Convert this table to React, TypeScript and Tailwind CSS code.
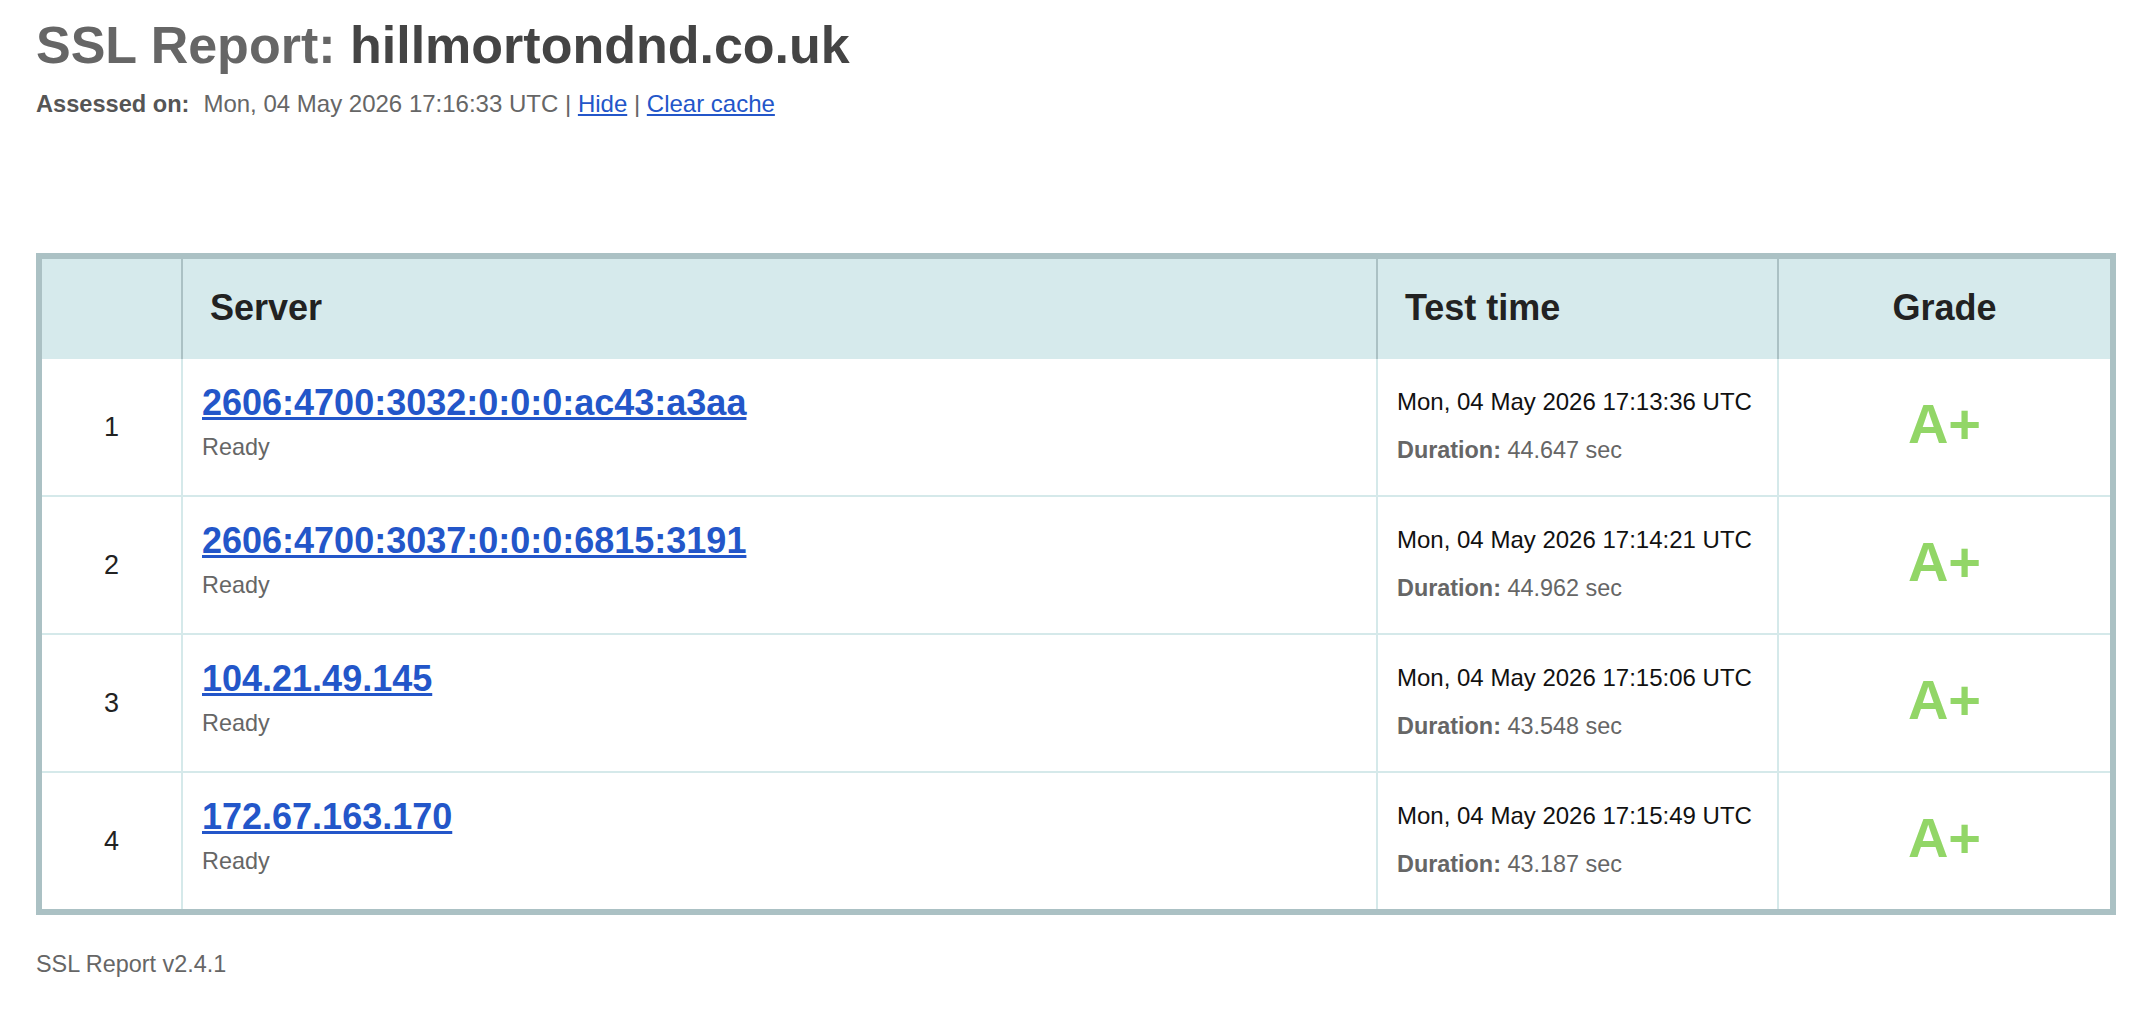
import React from "react";

const rows = [
  { n: 1, host: "2606:4700:3032:0:0:0:ac43:a3aa", time: "Mon, 04 May 2026 17:13:36 UTC", dur: "44.647 sec" },
  { n: 2, host: "2606:4700:3037:0:0:0:6815:3191", time: "Mon, 04 May 2026 17:14:21 UTC", dur: "44.962 sec" },
  { n: 3, host: "104.21.49.145", time: "Mon, 04 May 2026 17:15:06 UTC", dur: "43.548 sec" },
  { n: 4, host: "172.67.163.170", time: "Mon, 04 May 2026 17:15:49 UTC", dur: "43.187 sec" },
];

export default function App() {
  return (
    <div
      className="min-h-screen bg-white pl-[36px] pt-[15px]"
      style={{ fontFamily: '"Liberation Sans", Arial, Helvetica, sans-serif' }}
    >
      <h1 className="text-[52px] font-bold leading-[60px]">
        <span className="text-[#666666]">SSL Report:</span>{" "}
        <span className="text-[#444444]">hillmortondnd.co.uk</span>
      </h1>
      <div className="mt-[14px] flex items-baseline text-[24px] leading-[30px] text-[#666666]">
        <span className="mr-[14px] text-[23.6px] font-bold text-[#555555]">Assessed on:</span>
        <span>
          Mon, 04 May 2026 17:16:33 UTC{" | "}
          <a href="#" className="text-[#2356c9] underline">Hide</a>
          {" | "}
          <a href="#" className="text-[#2356c9] underline">Clear cache</a>
        </span>
      </div>

      <div className="mt-[134px] w-[2080px] border-[6px] border-[#abc1c4]">
        <div className="grid h-[100px] grid-cols-[139px_1195px_401px_333px] bg-[#d6eaec] text-[36px] font-bold text-[#222222]">
          <div />
          <div className="flex items-center border-l-2 border-[#abc1c4] pb-[2px] pl-[27px]">Server</div>
          <div className="flex items-center border-l-2 border-[#abc1c4] pb-[2px] pl-[27px]">Test time</div>
          <div className="flex items-center justify-center border-l-2 border-[#abc1c4] pb-[2px]">Grade</div>
        </div>
        {rows.map((r, i) => (
          <div
            key={r.n}
            className={
              "grid grid-cols-[139px_1195px_401px_333px] " +
              (i < rows.length - 1 ? "h-[138px] border-b-2 border-[#d5e9ea]" : "h-[136px]")
            }
          >
            <div className="flex items-center justify-center text-[27px] text-[#222222]">{r.n}</div>
            <div className="border-l-2 border-[#d5e9ea] pl-[19px] pt-[23px]">
              <div className="text-[36px] font-bold leading-[42px]">
                <a href="#" className="text-[#2356c9] underline">{r.host}</a>
              </div>
              <div className="mt-[9px] text-[23.4px] leading-[28px] text-[#666666]">Ready</div>
            </div>
            <div className="border-l-2 border-[#d5e9ea] pl-[19px] pt-[29px]">
              <div className="text-[24px] leading-[28px] text-[#111111]">{r.time}</div>
              <div className="mt-[20px] text-[23.4px] leading-[28px] text-[#666666]">
                <span className="font-bold">Duration:</span> {r.dur}
              </div>
            </div>
            <div className="flex items-center justify-center border-l-2 border-[#d5e9ea] pb-[6px] text-[56px] font-bold text-[#92d667]">
              A+
            </div>
          </div>
        ))}
      </div>

      <div className="mt-[35px] text-[23.4px] leading-[28px] text-[#666666]">SSL Report v2.4.1</div>
    </div>
  );
}
